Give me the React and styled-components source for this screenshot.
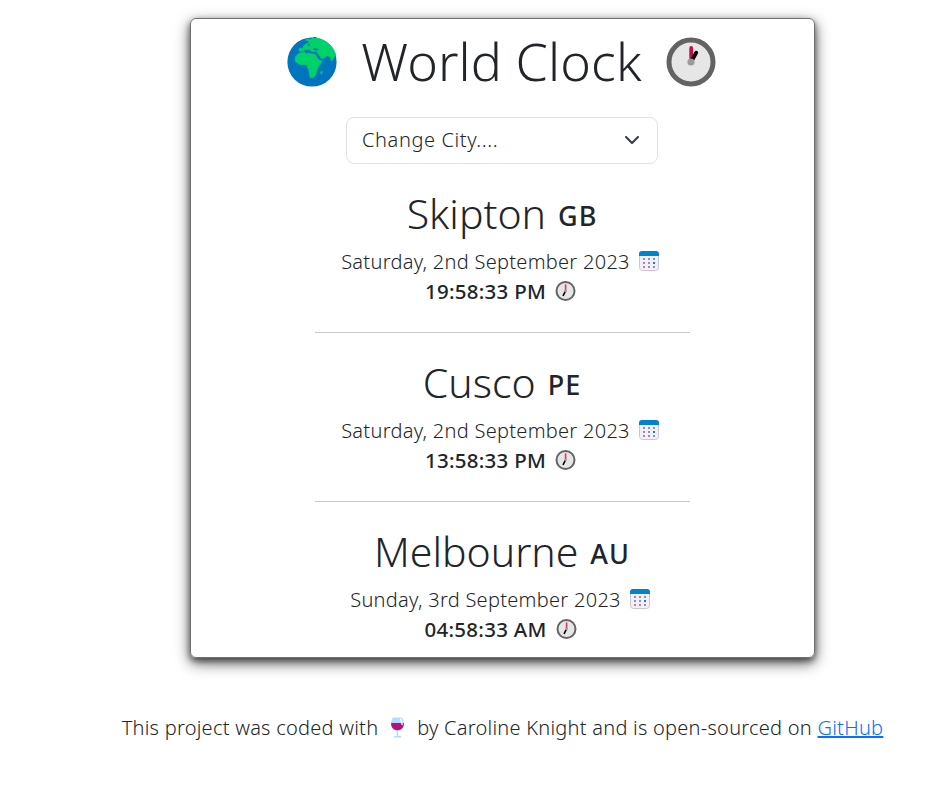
import React from 'react';
import styled, { createGlobalStyle } from 'styled-components';

const GlobalStyle = createGlobalStyle`
  body {
    margin: 0;
    background: #fff;
    color: #212529;
    font-family: 'Noto Sans', 'Open Sans', sans-serif;
    font-weight: 300;
    overflow: hidden;
  }
`
const Page = styled.div`
  display: flex;
  flex-direction: column;
  align-items: center;
  box-sizing: border-box;
  padding: 18px 0 0 53px;
`
const Card = styled.main`
  display: flex;
  flex-direction: column;
  align-items: center;
  box-sizing: border-box;
  width: 625px;
  height: 640px;
  border: 1px solid #707070;
  border-radius: 6px;
  box-shadow: 0 5px 15px rgba(0, 0, 0, 0.6), 0 3px 6px rgba(0, 0, 0, 0.5);
`
const Header = styled.header`
  display: flex;
  flex-shrink: 0;
  align-items: center;
  gap: 24px;
  height: 85px;
  margin-right: 2px;
`
const Title = styled.h1`
  margin: 0;
  padding-bottom: 2px;
  font-size: 52px;
  font-weight: 300;
  line-height: 82px;
  letter-spacing: 0.1px;
  white-space: nowrap;
`
const Select = styled.div`
  display: flex;
  flex-shrink: 0;
  align-items: center;
  justify-content: space-between;
  box-sizing: border-box;
  width: 312px;
  height: 47px;
  margin: 13px 1px 0 0;
  padding: 0 17px 2px 15px;
  border: 1px solid #dee2e6;
  border-radius: 8px;
  font-size: 20px;
  letter-spacing: 0.6px;
`
const City = styled.section`
  display: flex;
  flex-direction: column;
  flex-shrink: 0;
  align-items: center;
  width: 375px;
  padding: 23px 0 25px;

  & + & {
    border-top: 1px solid #c7c8c9;
  }
`
const CityName = styled.h2`
  display: flex;
  gap: 12px;
  height: 56px;
  margin: 0 1px 4px 0;
  font-size: 41px;
  font-weight: 300;
  line-height: 52px;
`
const Country = styled.small`
  font-size: 27px;
  font-weight: 500;
  line-height: 58px;
  letter-spacing: 1px;
`
const Row = styled.div`
  display: flex;
  align-items: center;
  gap: 9px;
  box-sizing: border-box;
  height: 30px;
  padding-right: 5px;
  font-size: 20px;
  letter-spacing: 0.28px;
  line-height: 30px;
  white-space: nowrap;

  svg {
    margin-bottom: 2px;
  }
`
const TimeRow = styled(Row)`
  padding: 0 4px 2px 0;
  font-size: 20.5px;
  font-weight: 500;

  svg {
    margin-bottom: 0;
  }
`
const Footer = styled.footer`
  display: flex;
  align-items: center;
  height: 30px;
  margin-top: 54px;
  font-size: 20px;
  letter-spacing: 0.25px;
  white-space: pre;

  svg {
    margin: 0 1px;
  }
`
const Link = styled.a`
  color: #0d6efd;
  text-decoration: underline;
`

const Globe = () => (
  <svg width="50" height="50" viewBox="0 0 50 50">
    <circle cx="25" cy="25" r="24.6" fill="#0074bd" />
    <g fill="#00d26a" stroke="#00d26a" strokeWidth="0.8" strokeLinejoin="round">
      <path d="M18.5 3L21 2l2.500.7L26 .8C37 1 46 8 48.800 18l-1.800 2.500-2.500 3.500-1-4-3-1.500-2.500 2-3.500 1-1.500-2.500L30.500 16l-.5-2-5 .5-3-2.500-5 1-1 1.500-4-.5.3-2.500 3.700-.5 1-2.500 2-1.500 2.500-.5.500-2.500z" />
      <path d="M12 16.300l5.500-1 1.700 1.700 2.800-.5 6.500 1 2.500 5 4 2-4.500 6.500-2 7-3 3-2.500-.8-.5-4.200-1-4-2-4.500h-6.500l-4.800-3.500.3-4z" />
      <path d="M35.200 34.500l-.7 2.500-.8-.5.3-1.800z" />
    </g>
    <path fill="#0074bd" d="M20.500 8l2-1.500.5 1.500-.5 1.300z M26 12.500l1.500-1.700 1.500.8 2 .2.500 1.200-3 .6z M26 0h4l-2 1.500z" />
  </svg>
)
const BigClock = () => (
  <svg width="50" height="50" viewBox="0 0 50 50">
    <circle cx="25" cy="25" r="22" fill="#e6e6e6" stroke="#636363" strokeWidth="5" />
    <path d="M25.2 11v14" stroke="#ca0b4a" strokeWidth="3.8" strokeLinecap="round" />
    <path d="M25 25l5.2-9.3" stroke="#000" strokeWidth="3.8" strokeLinecap="round" />
    <circle cx="25" cy="25" r="3.6" fill="#9b9b9b" />
  </svg>
)
const SmallClock = () => (
  <svg width="21" height="21" viewBox="0 0 21 21">
    <circle cx="10.5" cy="10" r="9" fill="#e6e6e6" stroke="#636363" strokeWidth="2" />
    <path d="M10.6 4.1v5.6" stroke="#dc3569" strokeWidth="1.6" strokeLinecap="round" />
    <path d="M10.2 10.7l-1.9 3.7" stroke="#000" strokeWidth="1.6" strokeLinecap="round" />
    <circle cx="10.5" cy="10" r="1.3" fill="#9b9b9b" />
  </svg>
)
const Calendar = () => (
  <svg width="20" height="21" viewBox="0 0 20 21">
    <rect x="0.5" y="0.5" width="19" height="19" rx="3" fill="#f3eef8" stroke="#cdc4d6" />
    <path d="M0 5V3a3 3 0 0 1 3-3h14a3 3 0 0 1 3 3v2z" fill="#0084ce" />
    <path d="M4 7h2v2H4z M9 7h2v2H9z M14 7h2v2h-2z M4 11h2v2H4z M9 11h2v2H9z M4 15h2v2H4z M9 15h2v2H9z M14 15h2v2h-2z" fill="#998ea4" />
    <path d="M14 11h2v2h-2z" fill="#0084ce" />
  </svg>
)
const Wine = () => (
  <svg width="15" height="21" viewBox="0 0 15 21">
    <path d="M2.8.5h9.4c1 2.4 1.7 4.4 1.7 6.7 0 4.1-2.7 6.5-5.6 6.8V19h2.8v1.4H3.9V19h2.8v-5C3.8 13.7 1.1 11.3 1.1 7.2 1.1 4.9 1.8 2.9 2.8.5z" fill="#b4dcff" />
    <path d="M1.2 6.1h12.6c.5 4.5-2.5 7.2-6.3 7.2S.7 10.6 1.2 6.1z" fill="#b4117c" />
    <path d="M10.6 2l1.6 5.5" stroke="#fff" strokeWidth="1.3" strokeLinecap="round" />
  </svg>
)
const Chevron = () => (
  <svg width="16" height="16" viewBox="0 0 16 16" fill="none">
    <path d="m2 5 6 6 6-6" stroke="#343a40" strokeWidth="2" strokeLinecap="round" strokeLinejoin="round" />
  </svg>
)

const cities = [
  { name: 'Skipton', country: 'GB', date: 'Saturday, 2nd September 2023', time: '19:58:33 PM' },
  { name: 'Cusco', country: 'PE', date: 'Saturday, 2nd September 2023', time: '13:58:33 PM' },
  { name: 'Melbourne', country: 'AU', date: 'Sunday, 3rd September 2023', time: '04:58:33 AM' },
];

const App = () => {
  return (
    <Page>
      <GlobalStyle />
      <Card>
        <Header>
          <Globe />
          <Title>World Clock</Title>
          <BigClock />
        </Header>
        <Select role="combobox">
          <span>Change City....</span>
          <Chevron />
        </Select>
        {cities.map((city) => (
          <City key={city.name}>
            <CityName>
              {city.name}
              <Country>{city.country}</Country>
            </CityName>
            <Row>
              {city.date}
              <Calendar />
            </Row>
            <TimeRow>
              {city.time}
              <SmallClock />
            </TimeRow>
          </City>
        ))}
      </Card>
      <Footer>
        <span>This project was coded with  </span>
        <Wine />
        <span>  by Caroline Knight and is open-sourced on </span>
        <Link href="#">GitHub</Link>
      </Footer>
    </Page>
  );
}

export default App;
